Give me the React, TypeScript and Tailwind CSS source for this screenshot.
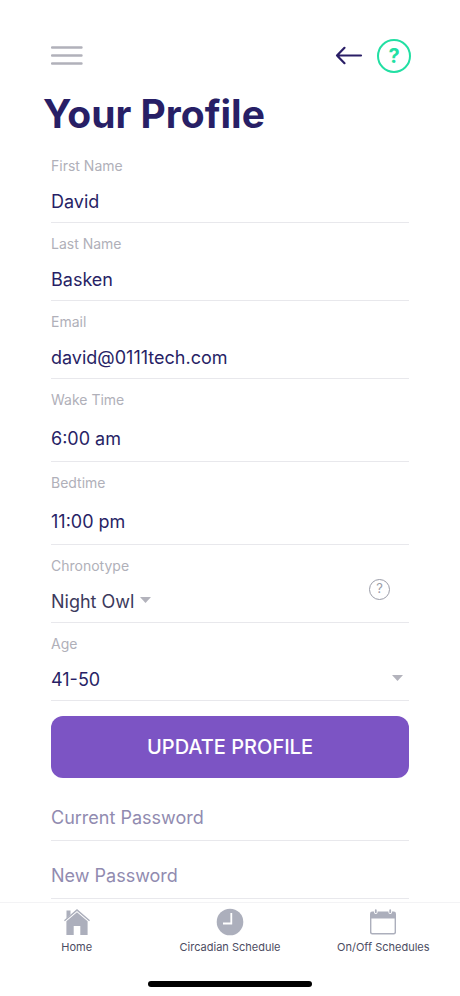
import type { ReactNode } from "react";

const lineClass = "border-b border-[#e8e8ec]";
const labelClass = "mb-px block text-sm leading-5 text-[#b0b0b9]";

type TextFieldProps = {
  id: string;
  label: string;
  value: string;
  type?: string;
  tall?: boolean;
};

function TextField({ id, label, value, type = "text", tall = false }: TextFieldProps) {
  return (
    <div className={`${lineClass} pt-[11px]`}>
      <label htmlFor={id} className={labelClass}>
        {label}
      </label>
      <input
        id={id}
        type={type}
        defaultValue={value}
        className={`block w-full bg-transparent pt-1 text-lg text-[#281f66] outline-none ${tall ? "h-[50px]" : "h-[45px]"}`}
      />
    </div>
  );
}

function PasswordField({ id, label }: { id: string; label: string }) {
  return (
    <div className={lineClass}>
      <input
        id={id}
        type="password"
        aria-label={label}
        placeholder={label}
        className="block h-[57px] w-full bg-transparent pt-3 text-lg text-[#281f66] outline-none placeholder:text-[#918bb0]"
      />
    </div>
  );
}

function Caret() {
  return (
    <svg viewBox="0 0 11 6" className="pointer-events-none h-1.5 w-[11px] shrink-0 text-[#b3b3bc]" aria-hidden="true">
      <path d="M0 0h11L5.500 6z" fill="currentColor" />
    </svg>
  );
}

function HomeIcon() {
  return (
    <svg viewBox="0 0 28 28" className="size-7" fill="#acafbc" aria-hidden="true">
      <path d="M3.500 2.500h4v4.200l-4 3.700z" />
      <path d="M14 1 27 12.200l-.9 1.100L14 3 1.900 13.300 1 12.200z" />
      <path d="M14 4.300 24.600 13.300V27H17.300v-9h-6.600v9H3.400V13.300z" />
    </svg>
  );
}

function ClockIcon() {
  return (
    <svg viewBox="0 0 28 28" className="size-7" aria-hidden="true">
      <circle cx="14" cy="14" r="13.300" fill="#acafbc" />
      <path d="M15.300 5v10.500H7" fill="none" stroke="#fff" strokeWidth="1.800" />
    </svg>
  );
}

function CalendarIcon() {
  return (
    <svg viewBox="0 0 28 28" className="size-7" aria-hidden="true">
      <rect x="1" y="3.500" width="26" height="23" rx="2.200" fill="#acafbc" />
      <path d="M2.400 10.500h23.200v13.600a1 1 0 0 1-1 1H3.400a1 1 0 0 1-1-1z" fill="#fff" />
      <path d="M6.800 2.500v1.800M21.200 2.500v1.800" stroke="#fff" strokeWidth="3.600" strokeLinecap="round" />
      <path d="M6.800 2.200v2M21.200 2.200v2" stroke="#acafbc" strokeWidth="1.800" strokeLinecap="round" />
    </svg>
  );
}

function NavItem({ icon, label }: { icon: ReactNode; label: string }) {
  return (
    <a href="#" className="flex flex-col items-center gap-[3px] text-[11px] leading-4 text-[#4c4c62]">
      {icon}
      <span className="whitespace-nowrap">{label}</span>
    </a>
  );
}

export default function App() {
  return (
    <div className="flex h-screen flex-col bg-white font-['Inter','Liberation_Sans',sans-serif]">
      <main className="min-h-0 flex-1 overflow-hidden px-[51px] pt-[39px]">
        <header className="flex items-center justify-between">
          <button type="button" aria-label="Menu">
            <svg viewBox="0 0 32 20" className="h-5 w-8" stroke="#b1b1ba" strokeWidth="2.400" strokeLinecap="round" aria-hidden="true">
              <path d="M1 1.500h29.500M1 9.500h29.500M1 17.500h29.500" />
            </svg>
          </button>
          <div className="flex items-center gap-3.5">
            <button type="button" aria-label="Back">
              <svg viewBox="0 0 28 20" className="h-5 w-7" fill="none" stroke="#2a1e66" strokeWidth="2.200" strokeLinecap="round" strokeLinejoin="round" aria-hidden="true">
                <path d="M26 9.500H2M9.500 1.800 2 9.500l7.500 7.700" />
              </svg>
            </button>
            <button
              type="button"
              aria-label="Help"
              className="-mr-0.5 flex size-[34px] items-center justify-center rounded-full border-2 border-[#22dfa3] text-xl font-bold text-[#22dfa3]"
            >
              ?
            </button>
          </div>
        </header>

        <h1 className="-ml-2 mt-[15px] text-[39px] font-bold leading-[52px] text-[#281f66]">Your Profile</h1>

        <form className="mt-[5px]">
          <TextField id="first-name" label="First Name" value="David" />
          <TextField id="last-name" label="Last Name" value="Basken" />
          <TextField id="email" label="Email" value="david@0111tech.com" type="email" />
          <TextField id="wake-time" label="Wake Time" value="6:00 am" tall />
          <TextField id="bedtime" label="Bedtime" value="11:00 pm" tall />

          <div className={`${lineClass} flex items-center justify-between pt-[11px]`}>
            <div>
              <label htmlFor="chronotype" className={labelClass}>
                Chronotype
              </label>
              <div className="flex items-center gap-1.5">
                <select
                  id="chronotype"
                  defaultValue="Night Owl"
                  className="field-sizing-content h-[45px] appearance-none bg-transparent pt-1 text-lg text-[#3c3a5c] outline-none"
                >
                  <option>Night Owl</option>
                </select>
                <Caret />
              </div>
            </div>
            <button
              type="button"
              aria-label="About chronotypes"
              className="mr-[19px] flex size-[21px] items-center justify-center rounded-full border border-[#9a9ca8] text-[13px] text-[#9a9ca8]"
            >
              ?
            </button>
          </div>

          <div className={`${lineClass} pt-[11px]`}>
            <label htmlFor="age" className={labelClass}>
              Age
            </label>
            <div className="flex items-center pr-1.5">
              <select
                id="age"
                defaultValue="41-50"
                className="h-[45px] flex-1 appearance-none bg-transparent pt-1 text-lg text-[#281f66] outline-none"
              >
                <option>41-50</option>
              </select>
              <Caret />
            </div>
          </div>

          <button type="submit" className="mt-[15px] block h-[62px] w-full rounded-xl bg-[#7c54c4] text-xl font-medium text-white">
            UPDATE PROFILE
          </button>

          <div className="mt-[5px]">
            <PasswordField id="current-password" label="Current Password" />
            <PasswordField id="new-password" label="New Password" />
          </div>
        </form>
      </main>

      <nav aria-label="Main" className="border-t border-[#f3f3f5] bg-white pb-[9px] pt-[5px]">
        <div className="grid grid-cols-3">
          <NavItem icon={<HomeIcon />} label="Home" />
          <NavItem icon={<ClockIcon />} label="Circadian Schedule" />
          <NavItem icon={<CalendarIcon />} label="On/Off Schedules" />
        </div>
        <div className="mx-auto mt-[26px] h-1.5 w-[164px] rounded-full bg-black" />
      </nav>
    </div>
  );
}
